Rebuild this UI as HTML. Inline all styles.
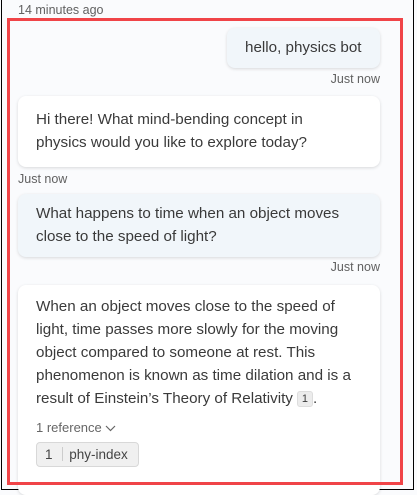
<!DOCTYPE html>
<html><head><style>
html,body{margin:0;padding:0}
body{width:417px;height:494px;position:relative;overflow:hidden;background:#fafbfd;font-family:"Liberation Sans",sans-serif;color:#333}
.frame{position:absolute;left:1px;top:-2px;width:413px;height:492px;border:1px solid #000;box-sizing:border-box}
.red{position:absolute;left:7px;top:18px;width:396px;height:467px;border:3px solid #f04448;box-sizing:border-box}
.ts{position:absolute;font-size:12.5px;color:#616161}
.b{position:absolute;border-radius:8px;box-shadow:0 1px 3px rgba(0,0,0,.14);font-size:15.2px;line-height:22.5px;color:#3a3a3a;box-sizing:border-box;white-space:nowrap}
.w{background:#fff}.u{background:#f1f6fa}
.cite{display:inline-block;background:#ececec;border:1px solid #ddd;border-radius:3px;font-size:11px;line-height:14px;padding:0 4px;vertical-align:1px;margin-left:4px}
</style></head><body>
<div class="ts" style="left:18px;top:3px">14 minutes ago</div>
<div class="frame"></div>
<div class="b u" style="left:227px;top:28px;width:153px;height:40px;padding:9px 0 0 18px">hello, physics bot</div>
<div class="ts" style="right:37px;top:72px">Just now</div>
<div class="b w" style="left:18px;top:96px;width:362px;height:71px;padding:13px 18px">Hi there! What mind-bending concept in<br>physics would you like to explore today?</div>
<div class="ts" style="left:18px;top:172px">Just now</div>
<div class="b u" style="left:18px;top:194px;width:362px;height:63px;padding:9px 18px">What happens to time when an object moves<br>close to the speed of light?</div>
<div class="ts" style="right:37px;top:260px">Just now</div>
<div class="b w" style="left:18px;top:285px;width:362px;height:210px;padding:10px 18px;line-height:23px">When an object moves close to the speed of<br>light, time passes more slowly for the moving<br>object compared to someone at rest. This<br>phenomenon is known as time dilation and is a<br>result of Einstein’s Theory of Relativity<span class="cite">1</span>.
<div style="font-size:13px;color:#666;margin-top:6px">1 reference <svg width="11" height="8" viewBox="0 0 11 8"><path d="M1 2l4.5 4.5L10 2" fill="none" stroke="#666" stroke-width="1.2"/></svg></div>
<div style="display:inline-block;margin-top:3px;border:1px solid #d8d8d8;background:#f0f0f0;border-radius:4px;font-size:13.5px;line-height:23px;padding:0 10px 0 8px;color:#444">1 <span style="display:inline-block;width:1px;height:14px;background:#ccc;margin:0 6px;vertical-align:-2px"></span>phy-index</div>
</div>
<div class="red"></div>
</body></html>
